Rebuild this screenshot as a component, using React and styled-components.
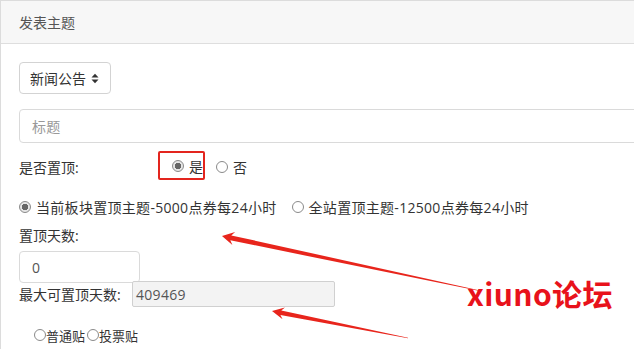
import React from "react";
import styled, { createGlobalStyle } from "styled-components";

const GlobalStyle = createGlobalStyle`
  html, body {
    margin: 0;
    padding: 0;
    background: #fff;
    overflow: hidden;
  }
  body {
    font-family: "Open Sans", "Noto Sans CJK SC", sans-serif;
    font-size: 14px;
    color: #333;
  }
`;

const Page = styled.div`
  position: relative;
  width: 634px;
  height: 349px;
  overflow: hidden;
`;

const Card = styled.div`
  width: 700px;
  border-top: 1px solid #dcdcdc;
  border-left: 1px solid #dcdcdc;
  box-sizing: border-box;
  height: 360px;
`;

const CardHeader = styled.div`
  height: 42px;
  display: flex;
  align-items: center;
  padding: 0 18px;
  background: #f7f7f7;
  border-bottom: 1px solid #dedede;
  color: #555;
  font-size: 14px;
`;

const CardBody = styled.div`
  padding: 18px 18px 0;
  display: flex;
  flex-direction: column;
`;

const SelectBox = styled.div`
  width: 92px;
  height: 32px;
  box-sizing: border-box;
  border: 1px solid #d3d3d3;
  border-radius: 4px;
  display: flex;
  align-items: center;
  padding-left: 10px;
  gap: 5px;
  color: #333;
`;

const TextInput = styled.div`
  height: ${({ $h }) => $h}px;
  width: ${({ $w }) => $w};
  box-sizing: border-box;
  border: 1px solid ${({ $readonly }) => ($readonly ? "#d0d0d0" : "#dadada")};
  border-radius: ${({ $readonly }) => ($readonly ? "2px" : "4px")};
  background: ${({ $readonly }) => ($readonly ? "#f3f3f3" : "#fff")};
  display: flex;
  align-items: center;
  padding-left: ${({ $pad }) => $pad}px;
  color: ${({ $muted }) => ($muted ? "#999" : "#555")};
  margin-top: ${({ $mt }) => $mt || 0}px;
  letter-spacing: 0.3px;
`;

const Row = styled.div`
  display: flex;
  align-items: center;
  height: ${({ $h }) => $h}px;
  margin-top: ${({ $mt }) => $mt || 0}px;
  font-size: ${({ $fs }) => $fs || 14}px;
  letter-spacing: ${({ $ls }) => $ls || 0}px;
`;

const Label = styled.span`
  width: ${({ $w }) => ($w ? $w + "px" : "auto")};
  flex: none;
  color: #333;
`;

const Highlight = styled.div`
  width: 47px;
  height: 29px;
  box-sizing: border-box;
  border: 2px solid #e3251e;
  border-radius: 2px;
  display: flex;
  align-items: center;
  padding-left: 12px;
  gap: 5px;
  margin-top: -3px;
`;

const Radio = styled.span`
  width: ${({ $size }) => $size || 12}px;
  height: ${({ $size }) => $size || 12}px;
  box-sizing: border-box;
  border-radius: 50%;
  border: 1px solid #8a8a8a;
  flex: none;
  background: ${({ $checked }) =>
    $checked
      ? "radial-gradient(circle, #666 0 3px, #e6e6e6 3.5px)"
      : "#fff"};
`;

const Option = styled.label`
  display: flex;
  align-items: center;
  gap: ${({ $gap }) => ($gap === undefined ? 5 : $gap)}px;
  margin-right: ${({ $mr }) => $mr || 0}px;
  margin-left: ${({ $ml }) => $ml || 0}px;
  color: #333;
`;

const Brand = styled.div`
  position: absolute;
  left: 467px;
  top: 273px;
  font-family: "Noto Sans CJK SC", sans-serif;
  font-weight: 700;
  font-size: 30px;
  line-height: 40px;
  color: #e8121b;
  letter-spacing: 0.4px;
`;

const Overlay = styled.svg`
  position: absolute;
  left: 0;
  top: 0;
  pointer-events: none;
`;

function arrowPoints(tip, tail, headLen, headW, shaftW, tailW) {
  const dx = tail[0] - tip[0];
  const dy = tail[1] - tip[1];
  const len = Math.hypot(dx, dy);
  const ux = dx / len;
  const uy = dy / len;
  const nx = -uy;
  const ny = ux;
  const bx = tip[0] + ux * headLen;
  const by = tip[1] + uy * headLen;
  const cx = tip[0] + ux * headLen * 0.75;
  const cy = tip[1] + uy * headLen * 0.75;
  const pts = [
    [tip[0], tip[1]],
    [bx + nx * headW, by + ny * headW],
    [cx + nx * shaftW / 2, cy + ny * shaftW / 2],
    [tail[0] + nx * tailW / 2, tail[1] + ny * tailW / 2],
    [tail[0] - nx * tailW / 2, tail[1] - ny * tailW / 2],
    [cx - nx * shaftW / 2, cy - ny * shaftW / 2],
    [bx - nx * headW, by - ny * headW],
  ];
  return pts.map((p) => p.map((v) => v.toFixed(1)).join(",")).join(" ");
}

const SortIcon = () => (
  <svg width="8" height="11" viewBox="0 0 8 11">
    <path d="M0.5 4.5 L4 0.8 L7.5 4.5 Z" fill="#333" />
    <path d="M0.5 6.5 L4 10.2 L7.5 6.5 Z" fill="#333" />
  </svg>
);

export default function App() {
  return (
    <Page>
      <GlobalStyle />
      <Card>
        <CardHeader>发表主题</CardHeader>
        <CardBody>
          <SelectBox>
            新闻公告 <SortIcon />
          </SelectBox>
          <TextInput $h={34} $w="640px" $pad={12} $muted $mt={15}>
            标题
          </TextInput>
          <Row $h={28} $mt={10}>
            <Label $w={139}>是否置顶:</Label>
            <Highlight>
              <Radio $checked />
              是
            </Highlight>
            <Option $ml={11}>
              <Radio />否
            </Option>
          </Row>
          <Row $h={28} $mt={12} $ls={0.3}>
            <Option $mr={15}>
              <Radio $checked />
              当前板块置顶主题-5000点券每24小时
            </Option>
            <Option>
              <Radio />
              全站置顶主题-12500点券每24小时
            </Option>
          </Row>
          <Row $h={24} $mt={2}>
            <Label>置顶天数:</Label>
          </Row>
          <TextInput $h={32} $w="121px" $pad={12} $mt={4}>
            0
          </TextInput>
          <Row $h={26} $mt={-2}>
            <Label $w={113}>最大可置顶天数:</Label>
            <TextInput $h={26} $w="203px" $pad={3} $readonly>
              409469
            </TextInput>
          </Row>
          <Row $h={20} $mt={18} $fs={13} style={{ paddingLeft: 15 }}>
            <Option $gap={0} $mr={2}>
              <Radio $size={12} />
              普通贴
            </Option>
            <Option $gap={0}>
              <Radio $size={12} />
              投票贴
            </Option>
          </Row>
        </CardBody>
      </Card>
      <Overlay width="634" height="349">
        <polygon
          points={arrowPoints([222, 236], [481, 291], 12, 6.5, 5, 0.6)}
          fill="#e8251c"
        />
        <polygon
          points={arrowPoints([272, 311], [408, 338], 12, 6, 4.5, 0.5)}
          fill="#e8251c"
        />
      </Overlay>
      <Brand>xiuno论坛</Brand>
    </Page>
  );
}
